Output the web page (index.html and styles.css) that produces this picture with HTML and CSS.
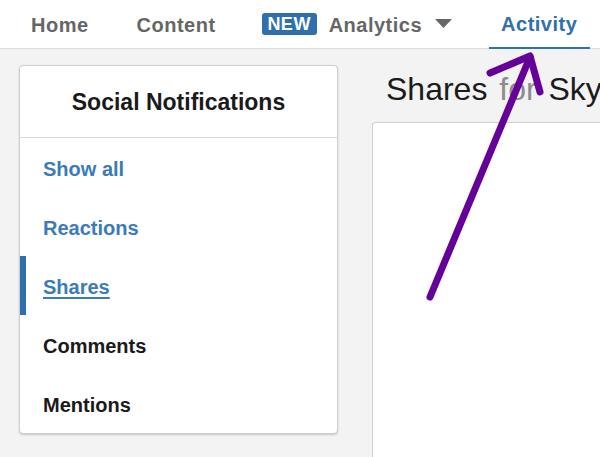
FILE: index.html
```html
<!DOCTYPE html>
<html>
<head>
<meta charset="utf-8">
<link rel="stylesheet" href="styles.css">
</head>
<body>
<header class="topnav">
  <a class="nav-item home">Home</a>
  <a class="nav-item content">Content</a>
  <span class="badge">NEW</span>
  <a class="nav-item analytics">Analytics</a>
  <svg class="caret" width="17" height="9" viewBox="0 0 17 9"><path d="M0 0 H17 L8.5 9 Z" fill="#666"/></svg>
  <a class="nav-item active">Activity</a>
</header>
<main class="main">
  <section class="card side">
    <div class="side-head">Social Notifications</div>
    <ul class="side-list">
      <li class="side-item link">Show all</li>
      <li class="side-item link">Reactions</li>
      <li class="side-item link current"><span class="u">Shares</span></li>
      <li class="side-item">Comments</li>
      <li class="side-item">Mentions</li>
    </ul>
  </section>
  <section class="content-col">
    <h1 class="title">Shares <span class="faded">for</span> Sky</h1>
    <div class="card big"></div>
  </section>
</main>
<svg class="annot" width="600" height="457" viewBox="0 0 600 457">
  <g fill="none" stroke="#650099" stroke-width="7" stroke-linecap="round" stroke-linejoin="round">
    <path d="M430 297 L530 57"/>
    <path d="M490 73 L530 56 L540 92"/>
  </g>
</svg>
</body>
</html>
```
FILE: styles.css
```css
* { box-sizing: border-box; }
html, body {
  margin: 0;
  padding: 0;
  width: 600px;
  height: 457px;
  overflow: hidden;
  background: #f3f3f3;
  font-family: "Liberation Sans", Arial, sans-serif;
}
.topnav {
  height: 49px;
  background: #fff;
  border-bottom: 1px solid #dcdcdc;
  display: flex;
  align-items: center;
  padding-left: 31px;
  padding-top: 2px;
}
.nav-item {
  font-size: 20px;
  font-weight: bold;
  letter-spacing: 0.5px;
  color: #666;
  white-space: nowrap;
}
.content { margin-left: 48px; }
.badge {
  margin-left: 46px;
  width: 55px;
  height: 22px;
  background: #2f6fae;
  color: #fff;
  border-radius: 3px;
  font-size: 18px;
  font-weight: bold;
  letter-spacing: 0.5px;
  display: flex;
  align-items: center;
  justify-content: center;
  margin-top: -2px;
}
.analytics { margin-left: 12px; }
.caret { margin-left: 13px; margin-top: -3px; }
.active {
  margin-left: 37px;
  align-self: stretch;
  display: flex;
  align-items: center;
  padding: 0 13px 0 12px;
  color: #2f70b0;
  border-bottom: 2px solid #2f70b0;
  margin-bottom: -1px;
}
.main {
  display: flex;
  align-items: flex-start;
  padding: 16px 0 0 19px;
  gap: 34px;
}
.card {
  background: #fff;
  border: 1px solid #cfcfcf;
  border-radius: 4px;
  box-shadow: 0 1px 2px rgba(0,0,0,0.18);
}
.side {
  width: 319px;
  flex: none;
}
.side-head {
  height: 72px;
  border-bottom: 1px solid #dcdcdc;
  display: flex;
  align-items: center;
  justify-content: center;
  padding-top: 1px;
  font-size: 23px;
  font-weight: bold;
  color: #1a1a1a;
}
.side-list {
  list-style: none;
  margin: 0;
  padding: 0;
}
.side-item {
  height: 59px;
  display: flex;
  align-items: center;
  padding-left: 23px;
  padding-top: 3px;
  font-size: 20px;
  font-weight: bold;
  color: #1a1a1a;
}
.side-item.link { color: #3b7bbb; }
.side-item.current { box-shadow: inset 6px 0 0 #2f6fae; }
.u { text-decoration: underline; text-underline-offset: 3px; text-decoration-thickness: 2px; }
.content-col {
  flex: 1;
  min-width: 0;
  height: 392px;
  padding-top: 5px;
  white-space: nowrap;
  overflow: hidden;
}
.title {
  margin: 0 0 14px 14px;
  font-size: 32px;
  line-height: 38px;
  font-weight: normal;
  word-spacing: 3px;
  color: #1b1b1b;
  overflow: hidden;
}
.faded { color: #8c8c8c; }
.big {
  height: 340px;
  border-bottom-right-radius: 0;
  border-top-right-radius: 0;
  border-right: none;
}
.annot {
  position: absolute;
  left: 0;
  top: 0;
  pointer-events: none;
}
```
